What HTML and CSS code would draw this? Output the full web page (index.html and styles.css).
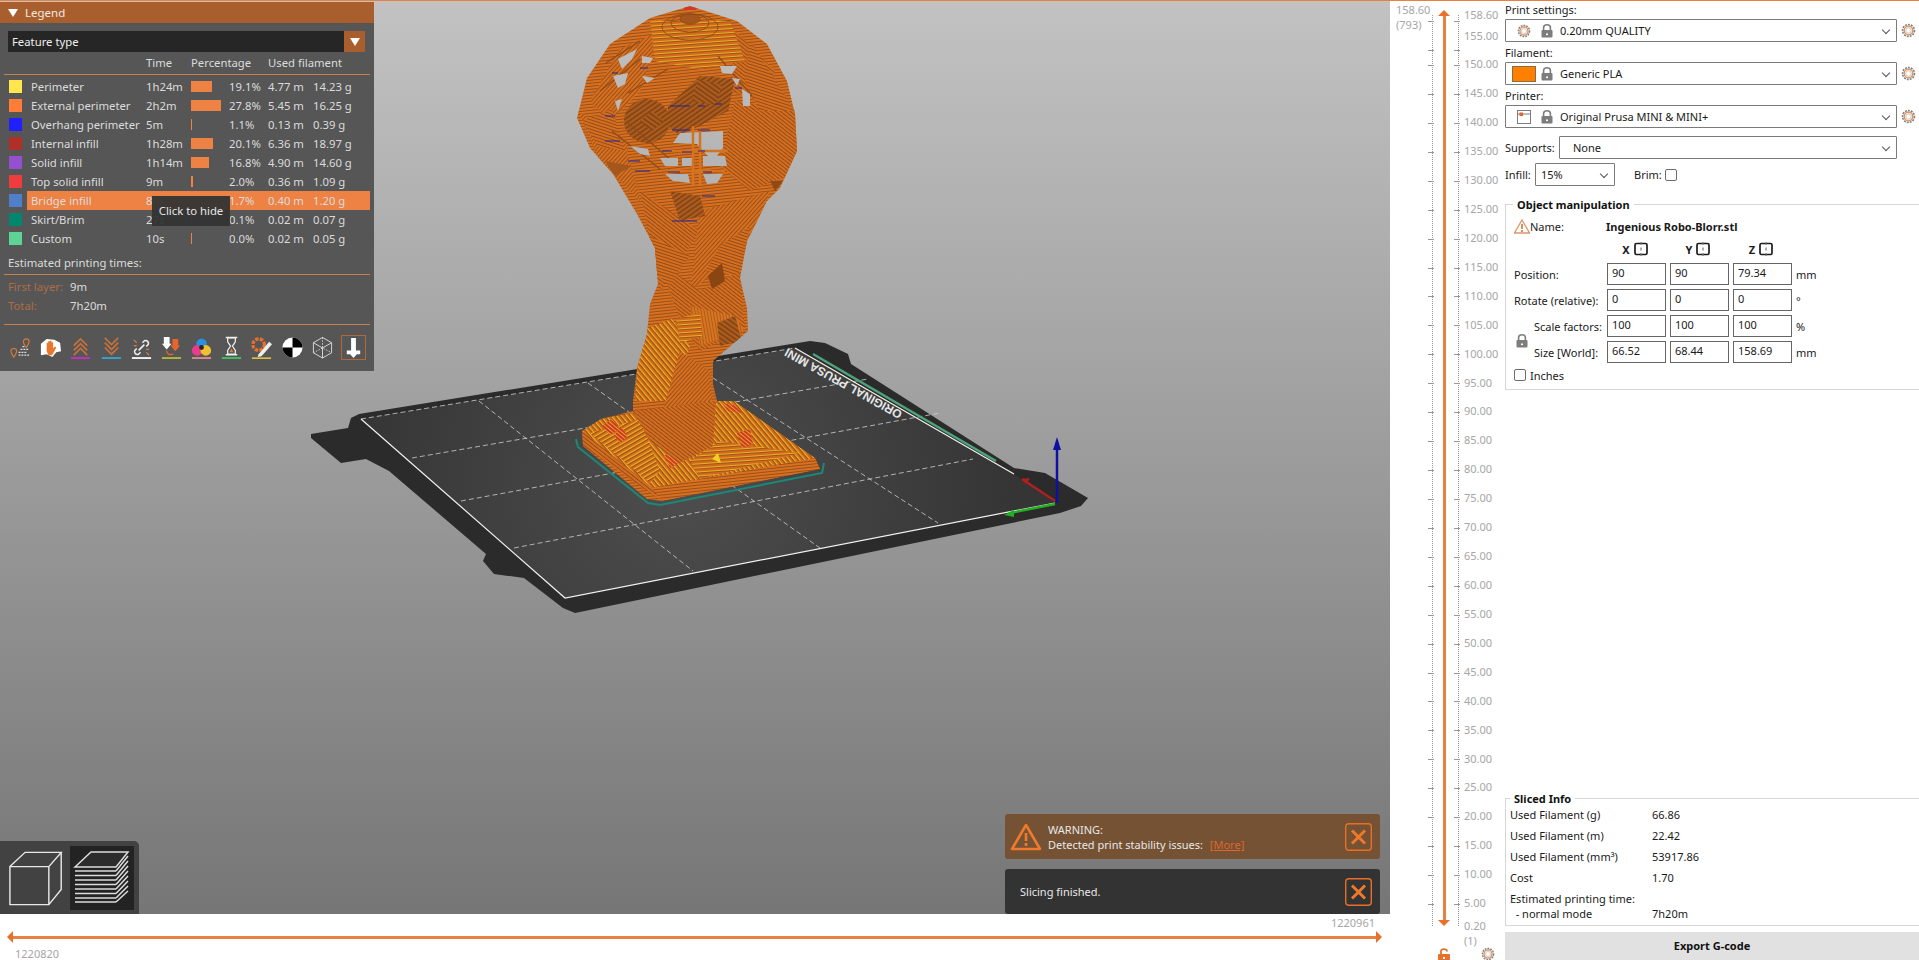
FILE: index.html
```html
<!DOCTYPE html>
<html>
<head>
	<title>PrusaSlicer</title>
	<link rel="stylesheet" href="styles.css">
</head>
<body>
<svg class="defs" width="0" height="0">
	<defs>
		<symbol id="gear" viewBox="0 0 16 16">
			<circle cx="8" cy="8" r="6.4" fill="#f2efea" stroke="#7d7d7d" stroke-width="1.600" stroke-dasharray="2 1.200"/>
			<circle cx="8" cy="8" r="4.600" fill="none" stroke="#d98f5c" stroke-width="1.400"/>
			<circle cx="8" cy="8" r="2.800" fill="#fff" stroke="#b5b5b5" stroke-width=".7"/>
		</symbol>
		<symbol id="lock" viewBox="0 0 12 14">
			<path d="M2.600 7V3.600C2.600 1.900 4 .8 6 .8S9.400 1.900 9.400 3.600V7" fill="none" stroke="#7d7d7d" stroke-width="1.600"/>
			<rect x=".5" y="6" width="11" height="7.500" rx="1" fill="#7d7d7d"/>
			<rect x="5" y="9.500" width="2" height="1.600" fill="#fff"/>
		</symbol>
		<symbol id="axis" viewBox="0 0 14 14">
			<rect x="1" y="1.500" width="12" height="11" rx="1.500" fill="none" stroke="#1c1c1c" stroke-width="1.700"/>
			<path d="M7 0V3M7 11V14M7 5.500V8.500" stroke="#777" stroke-width="1.200"/>
		</symbol>
		<symbol id="close" viewBox="0 0 27 28">
			<rect x=".7" y=".7" width="25.600" height="26.600" rx="3" fill="none" stroke="#e96f27" stroke-width="1.400"/>
			<path d="M7 7.500L20 20.500M20 7.500L7 20.500" stroke="#f0782c" stroke-width="3"/>
		</symbol>
		<linearGradient id="bggrad" gradientUnits="userSpaceOnUse" x1="0" y1="0" x2="0" y2="913">
			<stop offset="0" stop-color="#c2c2c2"/>
			<stop offset="1" stop-color="#767676"/>
		</linearGradient>
		<radialGradient id="sheet" gradientUnits="userSpaceOnUse" cx="680" cy="480" r="330">
			<stop offset="0" stop-color="#4e4e4e"/>
			<stop offset="1" stop-color="#353535"/>
		</radialGradient>
		<pattern id="st1" width="6" height="3" patternUnits="userSpaceOnUse" patternTransform="rotate(-6)">
			<rect width="6" height="3" fill="#d8701f"/>
			<rect y="2" width="6" height="1" fill="#98501a"/>
		</pattern>
		<pattern id="st2" width="6" height="3" patternUnits="userSpaceOnUse" patternTransform="rotate(38)">
			<rect width="6" height="3" fill="#d66e1f"/>
			<rect y="2" width="6" height="1" fill="#934c19"/>
		</pattern>
		<pattern id="st3" width="6" height="3" patternUnits="userSpaceOnUse" patternTransform="rotate(-48)">
			<rect width="6" height="3" fill="#d8701f"/>
			<rect y="2" width="6" height="1" fill="#98501a"/>
		</pattern>
		<pattern id="st4" width="6" height="3" patternUnits="userSpaceOnUse" patternTransform="rotate(80)">
			<rect width="6" height="3" fill="#da7420"/>
			<rect y="2" width="6" height="1" fill="#a85e1b"/>
		</pattern>
		<pattern id="st5" width="6" height="3" patternUnits="userSpaceOnUse" patternTransform="rotate(18)">
			<rect width="6" height="3" fill="#d66e1f"/>
			<rect y="2" width="6" height="1" fill="#934c19"/>
		</pattern>
		<pattern id="yel" width="6" height="4" patternUnits="userSpaceOnUse" patternTransform="rotate(-4)">
			<rect width="6" height="4" fill="#d2691e"/>
			<rect y="2" width="6" height="1.200" fill="#eab022"/>
			<rect y="3.200" width="6" height=".8" fill="#8f4b18"/>
		</pattern>
		<pattern id="yel2" width="6" height="4" patternUnits="userSpaceOnUse" patternTransform="rotate(50)">
			<rect width="6" height="4" fill="#cf661d"/>
			<rect y="1.800" width="6" height="1.300" fill="#eeb820"/>
			<rect y="3.100" width="6" height=".9" fill="#8f4b18"/>
		</pattern>
		<pattern id="yel3" width="6" height="4" patternUnits="userSpaceOnUse" patternTransform="rotate(-30)">
			<rect width="6" height="4" fill="#cf661d"/>
			<rect y="1.800" width="6" height="1.300" fill="#eeb820"/>
			<rect y="3.100" width="6" height=".9" fill="#8f4b18"/>
		</pattern>
		<pattern id="dark" width="6" height="4" patternUnits="userSpaceOnUse" patternTransform="rotate(-35)">
			<rect width="6" height="4" fill="#ae5c1d"/>
			<rect y="2.500" width="6" height="1.500" fill="#7a4015"/>
		</pattern>
		<pattern id="dark2" width="6" height="4" patternUnits="userSpaceOnUse" patternTransform="rotate(35)">
			<rect width="6" height="4" fill="#ae5c1d"/>
			<rect y="2.500" width="6" height="1.500" fill="#7a4015"/>
		</pattern>
		<pattern id="red" width="5" height="3" patternUnits="userSpaceOnUse" patternTransform="rotate(40)">
			<rect width="5" height="3" fill="#cc3a28"/>
			<rect y="2" width="5" height="1" fill="#e9a024"/>
		</pattern>
		<clipPath id="body">
			<path d="M690 5L737 20L767 43L787 80L795 113L797 150L780 187L767 200L747 240L740 277L747 307L748 330L713 360L713 383L717 400L734 400L815 457L820 468L662 500L647 498L583 445L582 430L601 418L633 410L633 400L637 367L647 333L650 303L658 283L655 247L637 213L613 173L590 147L577 117L587 77L610 43L650 17Z"/>
		</clipPath>
	</defs>
</svg>

<div class="app">
	<div class="viewport">
		<svg class="scene" viewBox="0 0 1390 913" width="1390" height="913">
			<!-- print bed -->
			<path d="M311 433L348 427L351 417L359 413L810 340L825 342L848 353L851 363L1014 467L1045 472L1088 497L1081 505L1060 512L575 612L563 607L524 577L494 573L483 560L486 553L389 470L366 458L341 462L311 437Z" fill="#2b2b2b"/>
			<path d="M361 418L795 347L1014 473L1055 502L565 597Z" fill="url(#sheet)"/>
			<g fill="none" stroke="#cfcfcf" stroke-width=".8" stroke-dasharray="5 3">
				<path d="M361 418L795 347"/>
				<path d="M479 400L693 570"/>
				<path d="M588 382L820 547"/>
				<path d="M713 377L938 522"/>
				<path d="M412 457L868 378"/>
				<path d="M461 500L940 412"/>
				<path d="M514 547L973 458"/>
			</g>
			<path d="M795 347L1014 473M361 418L565 597L1055 502" fill="none" stroke="#f2f2f2" stroke-width="1.200"/>
			<path d="M813 353L996 460" stroke="#4fa37a" stroke-width="2.500"/>
			<text class="bed-label" transform="translate(903 411) rotate(209)">ORIGINAL PRUSA MINI</text>
			<!-- axes -->
			<path d="M1055 500L1022 478" stroke="#b02020" stroke-width="2.500"/>
			<path d="M1022 478l8 -1l-4 6z" fill="#b02020"/>
			<path d="M1055 503L1010 512" stroke="#22b022" stroke-width="2.500"/>
			<path d="M1004 514l10 -5l0 7z" fill="#22b022"/>
			<path d="M1057 502V445" stroke="#1010a0" stroke-width="2.500"/>
			<path d="M1057 436l4 13h-8z" fill="#1010a0"/>
			<!-- skirt -->
			<path d="M576 438L578 446L648 502L660 504L822 472L824 462" fill="none" stroke="#1b8878" stroke-width="2"/>
			<!-- model -->
			<g clip-path="url(#body)">
				<rect x="560" y="0" width="280" height="520" fill="url(#st1)"/>
				<!-- head -->
				<path d="M620 48L660 30L640 90L610 120L590 100Z" fill="url(#st3)"/>
				<path d="M735 30L775 70L760 100L730 90Z" fill="url(#st2)"/>
				<path d="M577 110L625 140L640 200L600 160Z" fill="url(#st3)"/>
				<path d="M735 100L800 110L800 170L750 190L720 165Z" fill="url(#st2)"/>
				<path d="M750 40L795 110L760 110L745 80Z" fill="url(#st5)"/>
				<path d="M582 120L612 108L625 150L598 145Z" fill="url(#st5)"/>
				<path d="M650 20L730 20L745 60L700 68L655 60Z" fill="url(#yel)"/>
				<g fill="none" stroke="#8f4b18" stroke-width=".9">
					<ellipse cx="690" cy="18" rx="10" ry="5" fill="#a5561c"/>
					<ellipse cx="690" cy="22" rx="19" ry="9"/>
					<ellipse cx="690" cy="26" rx="28" ry="13"/>
				</g>
				<path d="M684 6h12v3h-12z" fill="#d8352a"/>
				<!-- body -->
				<path d="M640 190L700 230L660 290L650 240Z" fill="url(#st2)"/>
				<path d="M700 210L770 190L745 250L690 290Z" fill="url(#st3)"/>
				<path d="M720 245L750 225L740 275L705 270Z" fill="url(#st5)"/>
				<path d="M660 260L700 290L740 270L745 330L700 350L680 320Z" fill="url(#st2)"/>
				<path d="M650 235L690 255L668 285L655 270Z" fill="url(#st5)"/>
				<path d="M640 330L672 318L690 345L670 400L635 400Z" fill="url(#yel2)"/>
				<path d="M680 350L710 370L712 400L660 420Z" fill="url(#st3)"/>
				<path d="M690 305L735 315L745 330L700 345Z" fill="url(#st4)"/>
				<path d="M676 318L700 312L702 335L680 342Z" fill="url(#yel)"/>
				<path d="M670 190L700 195L705 215L680 220Z" fill="url(#dark)"/>
				<path d="M708 275L722 262L725 280L712 288Z" fill="#8a4513"/>
				<path d="M605 160L632 165L615 175Z" fill="#a5561c"/>
				<path d="M770 180L783 180L775 190Z" fill="#8f4a16"/>
				<path d="M717 322L735 315L742 340L720 345Z" fill="url(#dark2)"/>
				<!-- base -->
				<path d="M582 430L601 418L633 412L717 400L734 400L815 457L652 487Z" fill="url(#yel2)"/>
				<path d="M590 432L640 418L660 470L650 482Z" fill="url(#yel3)"/>
				<path d="M720 440L800 452L700 478L690 460Z" fill="url(#yel)"/>
				<path d="M582 430L652 487L662 500L583 445Z" fill="url(#st2)"/>
				<path d="M652 487L815 457L820 468L662 500Z" fill="url(#st1)"/>
				<path d="M602 425L612 418L620 428L610 434ZM614 434L622 426L628 436L620 442Z" fill="url(#red)"/>
				<path d="M664 455L674 450L680 462L670 467Z" fill="url(#red)"/>
				<path d="M737 432L750 428L753 443L742 447Z" fill="url(#red)"/>
				<path d="M722 402L735 404L742 412L728 410Z" fill="url(#red)"/>
				<path d="M633 410L716 400L713 445L680 462L650 440Z" fill="url(#st2)"/>
				<path d="M712 458l6 -6l3 10z" fill="#f0d020"/>
				<!-- inner spheres -->
				<ellipse cx="647" cy="120" rx="23" ry="22" fill="url(#dark)"/>
				<path d="M640 120l12 -10l12 10l-12 10z" fill="url(#dark2)"/>
				<path d="M668 105L700 75L735 78L728 110L680 135L668 125Z" fill="url(#dark)"/>
				<path d="M698 78L722 84L716 104L692 100Z" fill="url(#dark2)"/>
				<!-- lattice shading -->
				<path d="M606 62L640 40M600 90L640 58M628 92L668 68M612 130L660 168M628 122L672 160M718 55L752 95" stroke="#8f4b18" stroke-width="1.200" fill="none"/>
				<!-- holes -->
				<g fill="url(#bggrad)">
					<path d="M618 58L637 48L632 58L622 68Z"/>
					<path d="M613 75L628 72L625 83L618 87Z"/>
					<path d="M642 55L653 57L650 62L642 62Z"/>
					<path d="M642 75L655 77L647 82Z"/>
					<path d="M615 100L622 98L618 110Z"/>
					<path d="M720 65L737 65L732 73L722 72Z"/>
					<path d="M732 77L740 78L737 85Z"/>
					<path d="M742 88L750 93L750 105L743 105Z"/>
					<path d="M680 132L723 130L723 147L713 160L703 150L697 143L673 142Z"/>
					<path d="M660 157L678 157L678 165L665 165Z"/>
					<path d="M682 157L692 157L692 165L682 165Z"/>
					<path d="M703 155L725 155L727 165L703 165Z"/>
					<path d="M665 173L688 173L690 182L673 180Z"/>
					<path d="M703 173L723 173L717 182L707 183Z"/>
					<path d="M630 145L648 148L650 155L640 153Z"/>
				</g>
				<!-- ribs over the holes -->
				<path d="M693 125V185M700 128V185M670 150H728M668 170H725" stroke="#d5731f" stroke-width="2.500" fill="none"/>
				<!-- overhang lines -->
				<path d="M670 105H690M698 105H705M715 103H722M672 129H690M698 129H710M662 150H672M682 151H692M698 150H705M668 171H680M703 171H712M702 195H715M672 220H697M612 72H618M640 67H648M735 87H742M605 115H615M605 140H620M628 160H640M635 170H650" stroke="#23229a" stroke-width="1.200" fill="none"/>
			</g>
		</svg>

		<div class="legend">
			<div class="legend-title"><i class="tri"></i>Legend</div>
			<div class="legend-combo"><span>Feature type</span><b><i class="tri"></i></b></div>
			<div class="legend-head">
				<span>Time</span><span>Percentage</span><span>Used filament</span>
			</div>
			<div class="legend-rows">
				<div class="row"><i class="swatch c1"></i><div class="cells"><span>Perimeter</span><span>1h24m</span><span><i class="bar w21"></i></span><span>19.1%</span><span>4.77 m</span><span>14.23 g</span></div></div>
				<div class="row"><i class="swatch c2"></i><div class="cells"><span>External perimeter</span><span>2h2m</span><span><i class="bar w30"></i></span><span>27.8%</span><span>5.45 m</span><span>16.25 g</span></div></div>
				<div class="row"><i class="swatch c3"></i><div class="cells"><span>Overhang perimeter</span><span>5m</span><span><i class="bar w1"></i></span><span>1.1%</span><span>0.13 m</span><span>0.39 g</span></div></div>
				<div class="row"><i class="swatch c4"></i><div class="cells"><span>Internal infill</span><span>1h28m</span><span><i class="bar w22"></i></span><span>20.1%</span><span>6.36 m</span><span>18.97 g</span></div></div>
				<div class="row"><i class="swatch c5"></i><div class="cells"><span>Solid infill</span><span>1h14m</span><span><i class="bar w18"></i></span><span>16.8%</span><span>4.90 m</span><span>14.60 g</span></div></div>
				<div class="row"><i class="swatch c6"></i><div class="cells"><span>Top solid infill</span><span>9m</span><span><i class="bar w2"></i></span><span>2.0%</span><span>0.36 m</span><span>1.09 g</span></div></div>
				<div class="row"><i class="swatch c7"></i><div class="cells hover"><span>Bridge infill</span><span>8m</span><span><i class="bar w2"></i></span><span>1.7%</span><span>0.40 m</span><span>1.20 g</span></div></div>
				<div class="row"><i class="swatch c8"></i><div class="cells"><span>Skirt/Brim</span><span>27s</span><span><i class="bar w1"></i></span><span>0.1%</span><span>0.02 m</span><span>0.07 g</span></div></div>
				<div class="row"><i class="swatch c9"></i><div class="cells"><span>Custom</span><span>10s</span><span><i class="bar w1"></i></span><span>0.0%</span><span>0.02 m</span><span>0.05 g</span></div></div>
			</div>
			<div class="legend-est">Estimated printing times:</div>
			<div class="legend-times">
				<div><span>First layer:</span>9m</div>
				<div><span>Total:</span>7h20m</div>
			</div>
			<div class="legend-tools">
				<svg viewBox="0 0 24 24"><path d="M5 22c-2-3-3-4-3-6a3 3 0 0 1 6 0c0 2-1 3-3 6zM18 12c-2-3-3-4-3-6a3 3 0 0 1 6 0c0 2-1 3-3 6z" fill="none" stroke="#d97a3c" stroke-width="1.200"/><path d="M10 20h11M10 17h8M12 14h9M14 11h3" stroke="#ddd" stroke-width="1.300" stroke-dasharray="2 1"/></svg>
				<svg viewBox="0 0 24 24"><path d="M2 8L8 3l8 1 6 3 1 9-5 1-4 5-6-3-6 1z" fill="#fff"/><path d="M8 12V7h1.600v4V5.500h1.700V11V5h1.700v6V6.500h1.700V13l1.800-2 1.500 1-2.500 5-2 3H10L8 16z" fill="#e8762c"/></svg>
				<svg viewBox="0 0 24 24"><path d="M5 10l7-7 7 7M5 15l7-7 7 7M5 20l7-7 7 7" fill="none" stroke="#c8703a" stroke-width="1.800"/><rect x="2" y="22" width="20" height="2" fill="#c030c0"/></svg>
				<svg viewBox="0 0 24 24"><path d="M5 2l7 7 7-7M5 7l7 7 7-7M5 12l7 7 7-7" fill="none" stroke="#c8703a" stroke-width="1.800"/><rect x="2" y="22" width="20" height="2" fill="#3aa0c8"/></svg>
				<svg viewBox="0 0 24 24"><path d="M7 13l-2 2a3 3 0 0 0 4 4l2-2M17 11l2-2a3 3 0 0 0-4-4l-2 2M9 15l6-6" fill="none" stroke="#f0f0f0" stroke-width="1.600"/><path d="M4 4l3 3M4 10h3M20 20l-3-3M20 14h-3" stroke="#e0813f" stroke-width="1.200"/><rect x="2" y="22" width="20" height="2" fill="#f0f0f0"/></svg>
				<svg viewBox="0 0 24 24"><path d="M4 1h6v7h2l-5 6-5-6h2z" fill="#fff"/><path d="M13 3h6v7h2l-5 6-5-6h2z" fill="#e8662c"/><path d="M7 15c0 4 3 5 7 4" fill="none" stroke="#e8662c" stroke-width="1.300"/><rect x="2" y="22" width="20" height="2" fill="#b4b43c"/></svg>
				<svg viewBox="0 0 24 24"><circle cx="12" cy="8" r="5.500" fill="#2a90e0"/><circle cx="7.500" cy="15" r="5.500" fill="#e83c8c"/><circle cx="16.500" cy="15" r="5.500" fill="#f0c030"/><circle cx="12" cy="12" r="2.500" fill="#262626"/><rect x="2" y="22" width="20" height="2" fill="#d88a8a"/></svg>
				<svg viewBox="0 0 24 24"><path d="M6 1.500h12M6 19.500h12" stroke="#eee" stroke-width="1.600"/><path d="M8 2v4l3 4.500L8 15v4h8v-4l-3-4.500L16 6V2z" fill="none" stroke="#eee" stroke-width="1.300"/><path d="M10 17l2-4 2 4z" fill="#e0813f"/><rect x="2" y="22" width="20" height="2" fill="#3cc060"/></svg>
				<svg viewBox="0 0 24 24"><circle cx="9" cy="9" r="6" fill="none" stroke="#e8702c" stroke-width="3.500" stroke-dasharray="3.500 1.300"/><path d="M9 19l11-13 3 2.500L12 21l-4 1z" fill="#eee"/><rect x="2" y="22.300" width="20" height="1.700" fill="#e0c040"/></svg>
				<svg viewBox="0 0 24 24"><circle cx="12" cy="12" r="10.500" fill="#fff"/><path d="M12 1.500A10.500 10.500 0 0 1 22.500 12H12zM12 22.500A10.500 10.500 0 0 1 1.500 12H12z" fill="#000"/></svg>
				<svg viewBox="0 0 24 24" fill="none" stroke="#d8d8d8" stroke-width="1"><path d="M12 1.500l9.500 5.500v10.500L12 23l-9.500-5.500V7zM2.500 7L12 12.500 21.500 7M12 12.500V23"/><path d="M12 1.500v11M2.500 17.500L12 12.500l9.500 5" stroke-dasharray="1.500 1.500"/></svg>
				<svg class="tool-on" viewBox="0 0 24 24"><path d="M9.500 2h5v13h4.500v4h-3.500L12 23l-3.500-4H5v-4h4.500z" fill="#fff"/></svg>
			</div>
			<div class="tooltip">Click to hide</div>
		</div>

		<div class="view-tools">
			<svg class="view-btn" viewBox="0 0 60 60" fill="none" stroke="#e8e8e8" stroke-width="1.500">
				<path d="M2 18h41v40H2zM2 18L18 3h38L43 18M56 3v39L43 58"/>
			</svg>
			<svg class="view-btn on" viewBox="0 0 64 64" fill="none" stroke="#dcdcdc" stroke-width="1.500">
				<path d="M5 21L21 6h37L46 21z" fill="#2c2c2c"/>
				<path d="M5 25h41M5 29.500h41M5 34h41M5 38.500h41M5 43h41M5 47.500h41M5 52h41M5 56h41" stroke-width="1.700"/>
				<path d="M46 25L58 10M46 29.500L58 15M46 34L58 20M46 38.500L58 25M46 43L58 30M46 47.500L58 35M46 52L58 40M46 56L58 45"/>
			</svg>
		</div>

		<div class="notes">
			<div class="note warn">
				<svg class="warn-icon" viewBox="0 0 32 28"><path d="M16 2L30 26H2z" fill="none" stroke="#ee7a2d" stroke-width="2.600" stroke-linejoin="round"/><path d="M16 10v8M16 20v3" stroke="#ee7a2d" stroke-width="2.600"/></svg>
				<div class="note-text">WARNING:<br>Detected print stability issues: <a href="#">[More]</a></div>
				<svg class="note-close"><use href="#close"/></svg>
			</div>
			<div class="note done">
				<div class="note-text">Slicing finished.</div>
				<svg class="note-close"><use href="#close"/></svg>
			</div>
		</div>
	</div>

	<div class="layer-slider">
		<div class="layer-now">158.60<br>(793)</div>
		<div class="ticks"></div>
		<div class="rail"><i class="rail-up"></i><i class="rail-line"></i><i class="rail-down"></i>
			<svg class="rail-lock" viewBox="0 0 12 14"><path d="M3 7V3.500C3 2 4.200 1.200 6 1.200S9 2 9 3.500" fill="none" stroke="#e8702c" stroke-width="1.800"/><rect y="6" width="12" height="8" rx="1" fill="#e8702c"/><rect x="5" y="9" width="2" height="2" fill="#fff"/></svg>
		</div>
		<div class="ticks"></div>
		<div class="scale">
			<div class="scale-top">158.60</div>
			<div>155.00</div><div>150.00</div><div>145.00</div><div>140.00</div><div>135.00</div><div>130.00</div>
			<div>125.00</div><div>120.00</div><div>115.00</div><div>110.00</div><div>105.00</div><div>100.00</div>
			<div>95.00</div><div>90.00</div><div>85.00</div><div>80.00</div><div>75.00</div><div>70.00</div>
			<div>65.00</div><div>60.00</div><div>55.00</div><div>50.00</div><div>45.00</div><div>40.00</div>
			<div>35.00</div><div>30.00</div><div>25.00</div><div>20.00</div><div>15.00</div><div>10.00</div>
			<div>5.00</div>
			<div class="scale-end">0.20</div>
			<div class="scale-end">(1)</div>
			<svg class="scale-gear"><use href="#gear"/></svg>
		</div>
	</div>

	<div class="sidebar">
		<div class="presets">
			<label>Print settings:</label>
			<div class="preset-row">
				<div class="combo"><svg class="ic"><use href="#gear"/></svg><svg class="ic-lock"><use href="#lock"/></svg><span>0.20mm QUALITY</span><i class="chev"></i></div>
				<svg class="side-gear"><use href="#gear"/></svg>
			</div>
			<label>Filament:</label>
			<div class="preset-row">
				<div class="combo"><i class="filament"></i><svg class="ic-lock"><use href="#lock"/></svg><span>Generic PLA</span><i class="chev"></i></div>
				<svg class="side-gear"><use href="#gear"/></svg>
			</div>
			<label>Printer:</label>
			<div class="preset-row">
				<div class="combo">
					<svg class="ic" viewBox="0 0 14 14"><rect x=".5" y=".5" width="13" height="13" fill="#fff" stroke="#7d7d7d"/><path d="M1 4H13" stroke="#7d7d7d"/><rect x="2.500" y="2.500" width="3.500" height="3.500" fill="#e0652c"/></svg>
					<svg class="ic-lock"><use href="#lock"/></svg><span>Original Prusa MINI &amp; MINI+</span><i class="chev"></i>
				</div>
				<svg class="side-gear"><use href="#gear"/></svg>
			</div>
		</div>
		<div class="supports">
			<label>Supports:</label>
			<div class="combo plain"><span>None</span><i class="chev"></i></div>
		</div>
		<div class="infill">
			<label>Infill:</label>
			<div class="combo small"><span>15%</span><i class="chev"></i></div>
			<label class="brim">Brim:</label>
			<i class="check"></i>
		</div>

		<fieldset class="group manip">
			<legend>Object manipulation</legend>
			<div class="name-row">
				<svg class="name-warn" viewBox="0 0 16 15"><path d="M8 1L15.500 14H.5z" fill="#fff" stroke="#e0956a" stroke-width="1.300"/><path d="M8 5v5M8 11v2" stroke="#d06a30" stroke-width="1.500"/></svg>
				<span class="name-label">Name:</span>
				<b>Ingenious Robo-Blorr.stl</b>
			</div>
			<div class="xyz">
				<span><b>X</b><svg class="ax"><use href="#axis"/></svg></span>
				<span><b>Y</b><svg class="ax"><use href="#axis"/></svg></span>
				<span><b>Z</b><svg class="ax"><use href="#axis"/></svg></span>
			</div>
			<div class="fields">
				<span class="f-label">Position:</span><i class="box">90</i><i class="box">90</i><i class="box">79.34</i><span>mm</span>
				<span class="f-label">Rotate (relative):</span><i class="box">0</i><i class="box">0</i><i class="box">0</i><span>°</span>
				<span class="f-label indent">Scale factors:</span><i class="box">100</i><i class="box">100</i><i class="box">100</i><span>%</span>
				<span class="f-label indent">Size [World]:</span><i class="box">66.52</i><i class="box">68.44</i><i class="box">158.69</i><span>mm</span>
			</div>
			<svg class="scale-lock"><use href="#lock"/></svg>
			<div class="inches"><i class="check"></i>Inches</div>
		</fieldset>

		<div class="grow"></div>

		<fieldset class="group sliced">
			<legend>Sliced Info</legend>
			<div class="info"><span>Used Filament (g)</span><span>66.86</span></div>
			<div class="info"><span>Used Filament (m)</span><span>22.42</span></div>
			<div class="info"><span>Used Filament (mm³)</span><span>53917.86</span></div>
			<div class="info"><span>Cost</span><span>1.70</span></div>
			<div class="info"><span>Estimated printing time:</span><span></span></div>
			<div class="info last"><span>&nbsp;&nbsp;- normal mode</span><span>7h20m</span></div>
		</fieldset>
		<div class="export">Export G-code</div>
	</div>

	<div class="move-slider">
		<div class="move-end">1220961</div>
		<div class="move-rail"><i class="rail-left"></i><i class="rail-h"></i><i class="rail-right"></i></div>
		<div class="move-start">1220820</div>
	</div>
</div>
</body>
</html>
```

FILE: styles.css
```css
html, body{
	margin: 0;
	height: 100%;
	overflow: hidden;
	background: #fff;
}
body{
	font-family: "Noto Sans", "Open Sans", sans-serif;
	font-size: 11px;
	color: #1a1a1a;
}
i{
	font-style: normal;
}
.defs{
	display: block;
	height: 0;
}
.app{
	display: grid;
	grid-template-columns: 1390px 115px 414px;
	grid-template-rows: 913px 47px;
	width: 1919px;
	height: 960px;
	overflow: hidden;
	border-top: 1px solid #e8803f;
	box-sizing: border-box;
}

/* 3d view */
.viewport{
	position: relative;
	background: linear-gradient(#c2c2c2, #767676);
	overflow: hidden;
}
.scene{
	display: block;
}
.bed-label{
	font-family: "Liberation Sans", sans-serif;
	font-size: 12px;
	font-weight: bold;
	fill: #e6e6e6;
}

/* legend panel */
.legend{
	position: absolute;
	left: 0;
	top: 1px;
	width: 374px;
	height: 369px;
	background: #565656;
	color: #dcdcdc;
	font-size: 11.3px;
}
.legend-title{
	display: flex;
	align-items: center;
	height: 21px;
	padding-left: 8px;
	background: #a95f2d;
	color: #f0e8e0;
	font-size: 11.5px;
}
.tri{
	display: block;
	width: 0;
	height: 0;
	margin-right: 7px;
	border-left: 5px solid transparent;
	border-right: 5px solid transparent;
	border-top: 8px solid #fff;
}
.legend-combo{
	display: flex;
	justify-content: space-between;
	align-items: center;
	height: 21px;
	margin: 8px 9px 0 8px;
	padding-left: 4px;
	background: #262626;
	color: #eee;
}
.legend-combo b{
	display: flex;
	align-items: center;
	justify-content: center;
	width: 21px;
	height: 21px;
	background: #a95f2d;
}
.legend-combo .tri{
	margin: 0;
}
.legend-head{
	display: grid;
	grid-template-columns: 45px 77px auto;
	height: 22px;
	line-height: 22px;
	margin: 0 4px;
	padding-left: 142px;
	border-bottom: 1px solid #c67f4f;
}
.legend-rows{
	padding-top: 2px;
}
.row{
	display: flex;
	align-items: center;
	height: 19px;
	padding-left: 9px;
}
.swatch{
	display: block;
	flex: none;
	width: 13px;
	height: 13px;
	margin-right: 5px;
}
.c1{ background: #ffe64d; }
.c2{ background: #ff7d38; }
.c3{ background: #1f1fff; }
.c4{ background: #b03029; }
.c5{ background: #9450d0; }
.c6{ background: #f03c3c; }
.c7{ background: #4f7fc8; }
.c8{ background: #00876e; }
.c9{ background: #5ed494; }
.cells{
	display: grid;
	grid-template-columns: 115px 45px 38px 39px 45px auto;
	align-items: center;
	width: 343px;
	height: 19px;
	padding-left: 4px;
	box-sizing: border-box;
}
.hover{
	background: #ed8244;
}
.bar{
	display: block;
	height: 11px;
	background: #ed8244;
}
.w1{ width: 1px; }
.w2{ width: 2px; }
.w18{ width: 18px; }
.w21{ width: 21px; }
.w22{ width: 22px; }
.w30{ width: 30px; }
.legend-est{
	height: 22px;
	line-height: 22px;
	margin: 4px 4px 0 4px;
	padding-left: 4px;
	border-bottom: 1px solid #c67f4f;
}
.legend-times{
	height: 47px;
	margin: 0 4px;
	padding: 2px 0 0 4px;
	border-bottom: 1px solid #c67f4f;
}
.legend-times div{
	height: 19px;
	line-height: 19px;
}
.legend-times span{
	display: inline-block;
	width: 62px;
	color: #ad6d45;
}
.legend-tools{
	display: flex;
	justify-content: space-between;
	align-items: center;
	padding: 10px 8px 0 9px;
}
.legend-tools svg{
	display: block;
	width: 23px;
	height: 23px;
}
.legend-tools .tool-on{
	border: 1px solid #b0683a;
}
.tooltip{
	position: absolute;
	left: 152px;
	top: 194px;
	width: 78px;
	height: 30px;
	line-height: 30px;
	text-align: center;
	background: rgba(52, 52, 52, .95);
	color: #e8e8e8;
}

/* view toggle */
.view-tools{
	position: absolute;
	left: 0;
	bottom: 0;
	display: flex;
	align-items: center;
	gap: 5px;
	width: 139px;
	height: 73px;
	padding-left: 8px;
	box-sizing: border-box;
	background: #424242;
	border-top-right-radius: 5px;
}
.view-btn{
	display: block;
	width: 57px;
	height: 58px;
}
.view-btn.on{
	width: 64px;
	height: 64px;
	background: #232323;
}

/* notifications */
.notes{
	position: absolute;
	right: 10px;
	bottom: 0;
	display: flex;
	flex-direction: column;
	gap: 10px;
	width: 375px;
	color: #e8e8e8;
	font-size: 11px;
	line-height: 15px;
}
.note{
	display: flex;
	align-items: center;
	height: 45px;
	border-radius: 3px;
}
.warn{
	background: #745233;
}
.done{
	background: #333;
	padding-left: 15px;
}
.warn-icon{
	width: 32px;
	height: 28px;
	margin: 0 6px 0 5px;
}
.note-text{
	flex: 1;
}
.note-text a{
	margin-left: 4px;
	color: #e0652c;
}
.note-close{
	width: 27px;
	height: 28px;
	margin-right: 8px;
}

/* layer slider */
.layer-slider{
	grid-row: 1 / 3;
	grid-column: 2;
	display: flex;
	color: #a6a6a6;
	font-size: 11px;
}
.layer-now{
	width: 38px;
	padding: 1px 0 0 6px;
	box-sizing: border-box;
	line-height: 15px;
}
.ticks{
	width: 6px;
	margin-top: 14px;
	height: 912px;
	background:
		repeating-linear-gradient(#999 0 1px, transparent 1px 2px) 4px 0 / 1px 100% no-repeat,
		repeating-linear-gradient(#999 0 1px, transparent 1px 28.93px) 0 50px / 4px 100%;
}
.rail{
	position: relative;
	display: flex;
	flex-direction: column;
	align-items: center;
	width: 16px;
	margin: 0 2px;
	padding-top: 9px;
}
.rail-up, .rail-down{
	flex: none;
	width: 0;
	height: 0;
	border-left: 6px solid transparent;
	border-right: 6px solid transparent;
}
.rail-up{
	border-bottom: 6px solid #e8702c;
}
.rail-down{
	border-top: 6px solid #e8702c;
}
.rail-line{
	width: 3px;
	height: 904px;
	background: #e8803f;
}
.rail-lock{
	position: absolute;
	left: 2px;
	top: 947px;
	width: 12px;
	height: 14px;
}
.scale{
	position: relative;
	flex: 1;
	padding-left: 4px;
	font-size: 11px;
}
.scale > div{
	height: 28.93px;
	line-height: 28.93px;
}
.scale > .scale-top{
	height: 20.5px;
	line-height: 27px;
}
.scale > .scale-end{
	height: 15px;
	line-height: 15px;
}
.scale-gear{
	position: absolute;
	left: 21px;
	top: 946px;
	width: 14px;
	height: 14px;
}

/* right panel */
.sidebar{
	grid-row: 1 / 3;
	grid-column: 3;
	display: flex;
	flex-direction: column;
	height: 959px;
	font-size: 11px;
	line-height: 15px;
}
.presets label{
	display: block;
	height: 18px;
	line-height: 17px;
}
.presets label + .preset-row{
	margin-bottom: 2px;
}
.preset-row{
	display: flex;
	align-items: center;
	gap: 4px;
}
.combo{
	position: relative;
	display: flex;
	align-items: center;
	width: 392px;
	height: 23px;
	box-sizing: border-box;
	border: 1px solid #7a7a7a;
	border-radius: 1px;
	background: #fff;
	padding-left: 11px;
}
.ic{
	width: 14px;
	height: 14px;
}
.ic-lock{
	width: 12px;
	height: 14px;
	margin-left: 10px;
}
.combo span{
	margin-left: 7px;
}
.filament{
	display: block;
	width: 24px;
	height: 16px;
	margin-left: -5px;
	background: #ff8000;
	border: 1px solid #8a6a40;
	box-sizing: border-box;
}
.filament + .ic-lock{
	margin-left: 5px;
}
.chev{
	position: absolute;
	right: 7px;
	top: 7px;
	width: 5px;
	height: 5px;
	border-right: 1px solid #555;
	border-bottom: 1px solid #555;
	transform: rotate(45deg);
}
.side-gear{
	width: 15px;
	height: 15px;
}
.supports, .infill{
	display: flex;
	align-items: center;
}
.supports{
	margin-top: 6px;
}
.supports label{
	width: 54px;
}
.combo.plain{
	width: 338px;
	padding-left: 6px;
}
.infill{
	margin-top: 4px;
}
.infill label{
	width: 30px;
}
.combo.small{
	width: 80px;
	padding-left: 0;
}
.combo.small span{
	margin-left: 5px;
}
.infill .brim{
	width: 31px;
	margin-left: 19px;
}
.check{
	display: block;
	width: 12px;
	height: 12px;
	box-sizing: border-box;
	border: 1px solid #6d6d6d;
	border-radius: 2px;
	background: #fdfdfd;
}
.group{
	position: relative;
	margin: 0;
	padding: 0;
	min-width: 0;
	border: 1px solid #d6d6d6;
	border-right: none;
}
.group legend{
	padding: 0 4px;
	font-weight: bold;
	color: #111;
}
.manip{
	margin-top: 11px;
	height: 193px;
	box-sizing: border-box;
}
.manip legend{
	margin-left: 7px;
}
.name-row{
	display: flex;
	align-items: center;
	height: 20px;
	padding-left: 8px;
	margin-top: 4px;
}
.name-warn{
	width: 16px;
	height: 15px;
}
.name-label{
	width: 76px;
}
.xyz{
	display: grid;
	grid-template-columns: 63px 63px 63px;
	height: 24px;
	align-items: center;
	margin-left: 96px;
	margin-top: 1px;
}
.xyz span{
	display: flex;
	align-items: center;
	justify-content: center;
	gap: 4px;
	padding-left: 3px;
}
.ax{
	width: 14px;
	height: 14px;
}
.fields{
	display: grid;
	grid-template-columns: 89px 59px 59px 59px auto;
	grid-auto-rows: 22px;
	column-gap: 4px;
	row-gap: 4px;
	align-items: center;
	padding-left: 8px;
	margin-top: 2px;
}
.f-label{
	margin-right: -4px;
	white-space: nowrap;
}
.indent{
	padding-left: 20px;
}
.box{
	display: block;
	height: 22px;
	line-height: 18px;
	padding-left: 4px;
	box-sizing: border-box;
	border: 1px solid #666;
	background: #fff;
}
.scale-lock{
	position: absolute;
	left: 10px;
	top: 122px;
	width: 12px;
	height: 14px;
}
.inches{
	display: flex;
	align-items: center;
	gap: 4px;
	height: 18px;
	padding-left: 8px;
	margin-top: 3px;
}
.grow{
	flex: 1;
}
.sliced{
	height: 135px;
	box-sizing: border-box;
	padding-left: 4px;
}
.sliced legend{
	margin-left: 0;
}
.info{
	display: flex;
	height: 21px;
	line-height: 17px;
}
.info span:first-child{
	width: 142px;
}
.info:nth-of-type(5){
	height: 15px;
}
.export{
	height: 28px;
	line-height: 28px;
	margin-top: 6px;
	text-align: center;
	font-weight: bold;
	background: #e1e1e1;
	color: #111;
}

/* move slider */
.move-slider{
	grid-row: 2;
	grid-column: 1;
	display: flex;
	flex-direction: column;
	color: #a6a6a6;
	line-height: 15px;
}
.move-end{
	height: 15px;
	margin-top: 1px;
	padding-right: 15px;
	text-align: right;
}
.move-rail{
	display: flex;
	align-items: center;
	height: 15px;
	padding: 0 8px 0 7px;
}
.rail-h{
	flex: 1;
	height: 3px;
	background: #e8803f;
}
.rail-left, .rail-right{
	width: 0;
	height: 0;
	border-top: 6px solid transparent;
	border-bottom: 6px solid transparent;
}
.rail-left{
	border-right: 6px solid #e8702c;
}
.rail-right{
	border-left: 6px solid #e8702c;
}
.move-start{
	padding: 2px 0 0 15px;
}
```
